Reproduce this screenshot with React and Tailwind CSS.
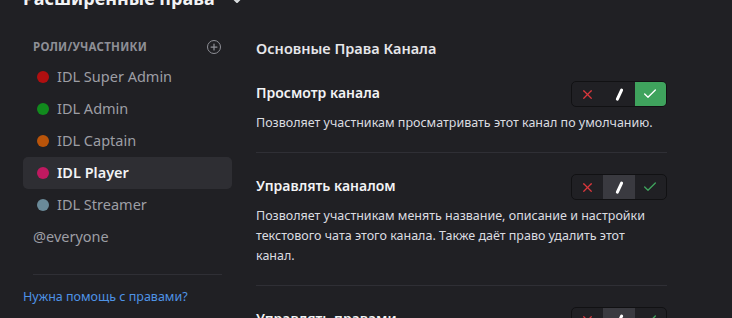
import { Plus, ChevronDown, X, Check } from "lucide-react";

const ROLES = [
  { name: "IDL Super Admin", color: "#b00f10" },
  { name: "IDL Admin", color: "#118a1d" },
  { name: "IDL Captain", color: "#b9540a" },
  { name: "IDL Player", color: "#bf1960", active: true },
  { name: "IDL Streamer", color: "#6a8a99" },
];

const PERMS = [
  {
    title: "Просмотр канала",
    desc: "Позволяет участникам просматривать этот канал по умолчанию.",
    state: "allow",
  },
  {
    title: "Управлять каналом",
    desc: "Позволяет участникам менять название, описание и настройки текстового чата этого канала. Также даёт право удалить этот канал.",
    state: "neutral",
  },
  {
    title: "Управлять правами",
    desc: "",
    state: "neutral",
  },
];

function Toggle({ state }) {
  return (
    <div className="flex h-[26px] w-[96px] shrink-0 overflow-hidden rounded-[5px] border border-[#111113]">
      <div className="flex w-8 items-center justify-center">
        <X size={15} strokeWidth={2} className="text-[#da373c]" />
      </div>
      <div
        className={
          "flex w-8 items-center justify-center " +
          (state === "neutral" ? "bg-[#3a3a40]" : "")
        }
      >
        <div className="h-[13px] w-[2.5px] rotate-[25deg] rounded-full bg-white" />
      </div>
      <div
        className={
          "flex w-8 items-center justify-center " +
          (state === "allow" ? "bg-[#3fa35d]" : "")
        }
      >
        <Check
          size={16}
          strokeWidth={2}
          className={state === "allow" ? "text-white" : "text-[#3fa35d]"}
        />
      </div>
    </div>
  );
}

export default function App() {
  return (
    <div
      className="h-[318px] w-[732px] overflow-hidden bg-[#202024] px-[23px]"
      style={{ fontFamily: '"Noto Sans", sans-serif' }}
    >
      <div className="-mt-[14px] flex h-6 items-center gap-[14px] text-[18px] font-bold text-[#f2f3f5]">
        Расширенные права
        <ChevronDown size={16} strokeWidth={3} className="mt-[4px] text-[#dbdee1]" />
      </div>

      <div className="flex">
        <aside className="w-[209px] shrink-0">
          <div className="mt-[28px] flex h-[18px] items-center justify-between pl-[10px] pr-[11px]">
            <span className="text-[11.5px] font-bold tracking-[0.02em] text-[#8e8f96]">
              РОЛИ/УЧАСТНИКИ
            </span>
            <div className="flex h-[14px] w-[14px] items-center justify-center rounded-full border-[1.5px] border-[#8e8f96]">
              <Plus size={10} strokeWidth={3} className="text-[#8e8f96]" />
            </div>
          </div>
          <div className="mt-[5px]">
            {ROLES.map((r) => (
              <div
                key={r.name}
                className={
                  "flex h-8 items-center gap-2 rounded-[5px] pl-[14px] text-[14.5px] " +
                  (r.active
                    ? "bg-[#2e2e33] font-semibold text-[#f2f3f5]"
                    : "text-[#9d9ea4]")
                }
              >
                <span
                  className="h-3 w-3 rounded-full"
                  style={{ backgroundColor: r.color }}
                />
                {r.name}
              </div>
            ))}
            <div className="flex h-8 items-center pl-[10px] text-[14.5px] text-[#9d9ea4]">
              @everyone
            </div>
          </div>
          <div className="mx-[10px] mt-[21px] border-t border-[#2f2f35]" />
          <a className="mt-[14px] block text-[12.5px] leading-4 text-[#4e93e6]">
            Нужна помощь с правами?
          </a>
        </aside>

        <main className="ml-6 mr-[42px] flex-1">
          <div className="mt-[28px] mb-[2px] h-5 text-[14.5px] font-semibold leading-5 text-[#e6e6ea]">
            Основные Права Канала
          </div>
          {PERMS.map((p) => (
            <section
              key={p.title}
              className="border-b border-[#2f2f35] pt-[21px] pb-[19px]"
            >
              <div className="flex h-[26px] items-center justify-between">
                <div className="-mt-[3px] text-[14px] font-semibold text-[#f2f3f5]">
                  {p.title}
                </div>
                <Toggle state={p.state} />
              </div>
              <p className="mt-[6px] pr-[14px] text-[12.5px] leading-5 text-[#dbdce0]">
                {p.desc}
              </p>
            </section>
          ))}
        </main>
      </div>
    </div>
  );
}
